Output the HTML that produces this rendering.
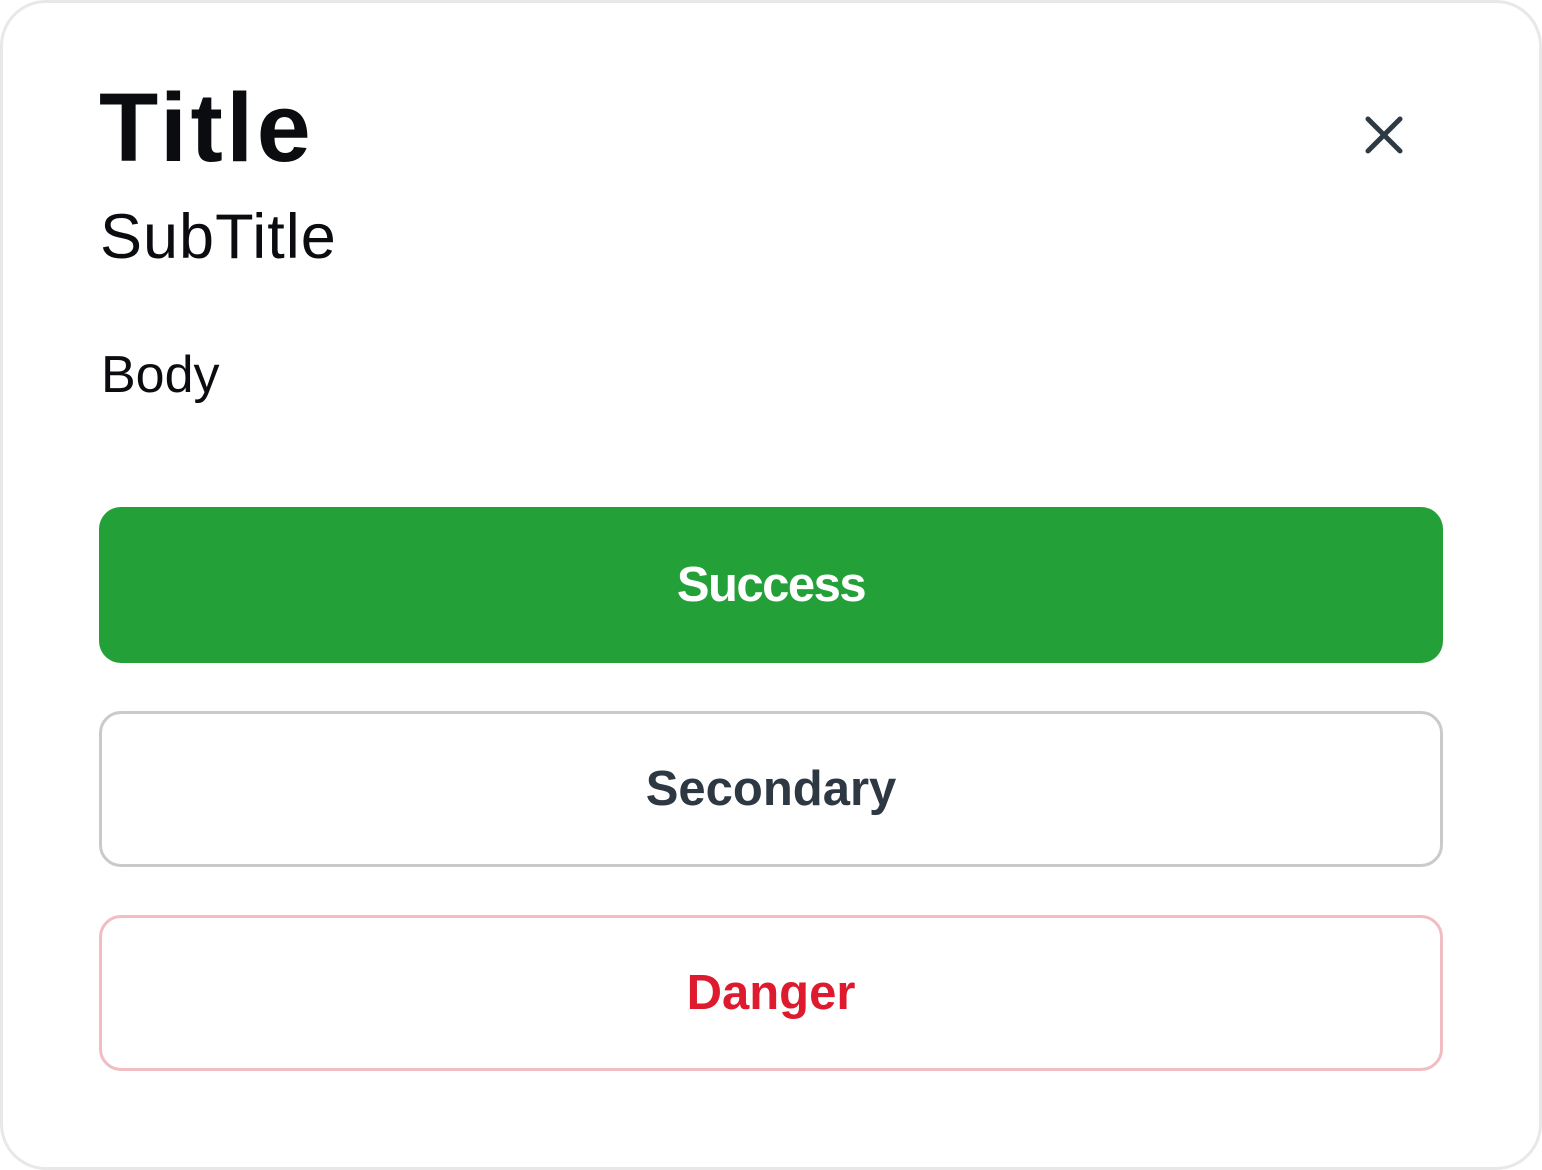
<!DOCTYPE html>
<html><head><style>
html,body{margin:0;padding:0;background:#fff;}
body{width:1542px;height:1170px;position:relative;overflow:hidden;font-family:"Liberation Sans","DejaVu Sans",sans-serif;}
.card{position:absolute;left:0;top:0;width:1536px;height:1164px;border:3px solid #e8e8e8;border-radius:46px;background:#fff;}
.t{position:absolute;left:99px;top:70px;font-size:97px;font-weight:bold;color:#0a0c10;line-height:1.2;letter-spacing:3.5px;}
.s{position:absolute;left:100px;top:200px;font-size:63px;color:#0a0c10;line-height:1.2;letter-spacing:1px;}
.b{position:absolute;left:101px;top:344px;font-size:52px;color:#0a0c10;line-height:1.2;}
.btn{position:absolute;left:99px;width:1344px;height:156px;box-sizing:border-box;border-radius:22px;display:flex;align-items:center;justify-content:center;font-size:49px;font-weight:bold;}
.g{top:507px;background:#23a038;color:#fff;letter-spacing:-1.5px;}
.sec{top:711px;border:3px solid #c9cacc;color:#2d3843;}
.d{top:915px;border:3px solid #f2bcc3;color:#dd1a2e;}
</style></head><body>
<div class="card"></div>
<div class="t">Title</div>
<div class="s">SubTitle</div>
<div class="b">Body</div>
<svg style="position:absolute;left:1362px;top:113px" width="44" height="44" viewBox="0 0 44 44"><path d="M6 6L38 38M38 6L6 38" stroke="#2d3a45" stroke-width="5" stroke-linecap="round"/></svg>
<div class="btn g">Success</div>
<div class="btn sec">Secondary</div>
<div class="btn d">Danger</div>
</body></html>
